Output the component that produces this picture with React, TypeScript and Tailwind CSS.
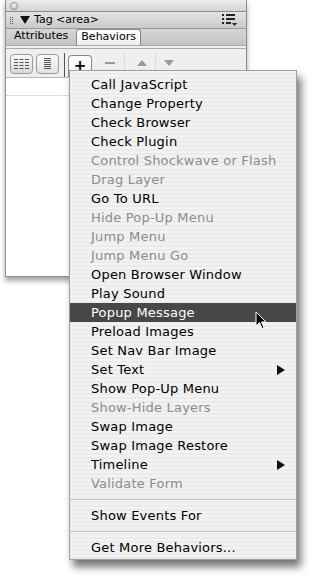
import React from 'react';

type Item = { label: string; disabled?: boolean; active?: boolean; sub?: boolean };

const items: Item[] = [
  { label: 'Call JavaScript' },
  { label: 'Change Property' },
  { label: 'Check Browser' },
  { label: 'Check Plugin' },
  { label: 'Control Shockwave or Flash', disabled: true },
  { label: 'Drag Layer', disabled: true },
  { label: 'Go To URL' },
  { label: 'Hide Pop-Up Menu', disabled: true },
  { label: 'Jump Menu', disabled: true },
  { label: 'Jump Menu Go', disabled: true },
  { label: 'Open Browser Window' },
  { label: 'Play Sound' },
  { label: 'Popup Message', active: true },
  { label: 'Preload Images' },
  { label: 'Set Nav Bar Image' },
  { label: 'Set Text', sub: true },
  { label: 'Show Pop-Up Menu' },
  { label: 'Show-Hide Layers', disabled: true },
  { label: 'Swap Image' },
  { label: 'Swap Image Restore' },
  { label: 'Timeline', sub: true },
  { label: 'Validate Form', disabled: true },
];

function MenuRow({ item }: { item: Item }) {
  const color = item.active ? 'bg-[#474747] text-white' : item.disabled ? 'text-[#8c8c8c]' : 'text-black';
  return (
    <div className={`flex h-[19px] items-center justify-between pl-[21px] pr-[11px] ${color}`}>
      <span>{item.label}</span>
      {item.sub && (
        <svg width="8" height="10" viewBox="0 0 8 10">
          <path d="M0 0 L8 5 L0 10 Z" fill="#111" />
        </svg>
      )}
    </div>
  );
}

function Separator() {
  return <div className="my-[6px] h-px bg-[#c4c4c4]" />;
}

export default function App() {
  return (
    <div
      className="relative h-[582px] w-[312px] overflow-hidden bg-white text-[13px]"
      style={{ fontFamily: '"DejaVu Sans", "Noto Sans", sans-serif' }}
    >
      {/* Tag inspector panel */}
      <div className="ml-[5px] flex h-[277px] w-[242px] flex-col border-x border-b border-[#8e8e8e] bg-white shadow-[0_4px_5px_rgba(0,0,0,0.35)]">
        {/* window title strip */}
        <div className="flex h-[12px] items-center border-b border-[#8a8a8a] bg-gradient-to-b from-[#ececec] to-[#d4d4d4] pl-[4px]">
          <div className="h-[8px] w-[8px] rounded-full border border-[#8a8a8a] bg-gradient-to-b from-[#f4f4f4] to-[#cfcfcf]" />
        </div>

        {/* panel group header */}
        <div className="flex h-[17px] items-center border-b border-[#9a9a9a] bg-gradient-to-b from-[#e4e4e4] to-[#c9c9c9] pl-[4px] pr-[8px]">
          <div className="mr-[3px] flex flex-col gap-[1px]">
            <div className="flex gap-[1px]">
              <div className="h-[1px] w-[1px] bg-[#555]" />
              <div className="h-[1px] w-[1px] bg-[#555]" />
            </div>
            <div className="flex gap-[1px]">
              <div className="h-[1px] w-[1px] bg-[#555]" />
              <div className="h-[1px] w-[1px] bg-[#555]" />
            </div>
            <div className="flex gap-[1px]">
              <div className="h-[1px] w-[1px] bg-[#555]" />
              <div className="h-[1px] w-[1px] bg-[#555]" />
            </div>
            <div className="flex gap-[1px]">
              <div className="h-[1px] w-[1px] bg-[#555]" />
              <div className="h-[1px] w-[1px] bg-[#555]" />
            </div>
          </div>
          <svg width="10" height="8" viewBox="0 0 10 8" className="ml-[4px]">
            <path d="M0 0 L10 0 L5 8 Z" fill="#111" />
          </svg>
          <span className="ml-[4px] text-[11px] text-black">Tag &lt;area&gt;</span>
          <svg width="16" height="12" viewBox="0 0 16 12" className="ml-auto">
            <rect x="0" y="0" width="2" height="2" fill="#222" />
            <rect x="4" y="0" width="9" height="2" fill="#222" />
            <rect x="0" y="4" width="2" height="2" fill="#222" />
            <rect x="4" y="4" width="9" height="2" fill="#222" />
            <rect x="0" y="8" width="2" height="2" fill="#222" />
            <rect x="4" y="8" width="5" height="2" fill="#222" />
            <path d="M10 9 L15 9 L12.5 12 Z" fill="#222" />
          </svg>
        </div>

        {/* tabs */}
        <div className="flex h-[16px] items-end bg-gradient-to-b from-[#d6d6d6] to-[#c4c4c4] pl-[8px]">
          <span className="mb-[1px] text-[11px] text-black">Attributes</span>
          <div className="ml-[8px] flex h-[16px] items-center rounded-t-[3px] border border-b-0 border-[#888] bg-gradient-to-b from-white to-[#eeeeee] px-[4px] text-[11px] text-black">
            Behaviors
          </div>
        </div>
        <div className="h-[4px] border-y border-[#a8a8a8] bg-[#f0f0f0]" />

        {/* toolbar */}
        <div className="flex h-[28px] items-end bg-[#efefef] pl-[4px]">
          <div className="mb-[3px] flex h-[20px] w-[23px] items-center justify-center rounded-[4px] border border-[#999] bg-gradient-to-b from-[#fafafa] to-[#d8d8d8]">
            <svg width="15" height="10" viewBox="0 0 15 10">
              {[0, 3, 6, 9].map((y) => (
                <g key={y}>
                  <rect x="0" y={y} width="4" height="1" fill="#555" />
                  <rect x="5.5" y={y} width="4" height="1" fill="#555" />
                  <rect x="11" y={y} width="4" height="1" fill="#555" />
                </g>
              ))}
            </svg>
          </div>
          <div className="mb-[3px] ml-[3px] flex h-[20px] w-[23px] items-center justify-center rounded-[4px] border border-[#999] bg-gradient-to-b from-[#fafafa] to-[#e2e2e2]">
            <svg width="7" height="12" viewBox="0 0 7 12">
              {[0, 2, 4, 6, 8, 10].map((y) => (
                <rect key={y} x="0" y={y} width="7" height="1" fill="#555" />
              ))}
            </svg>
          </div>
          <div className="ml-[5px] h-[24px] w-px bg-[#555]" />
          <div className="ml-[3px] flex h-[22px] w-[24px] items-start justify-center rounded-t-[4px] border border-b-0 border-[#888] bg-gradient-to-b from-white to-[#f4f4f4] pt-[2px]">
            <span className="text-[15px] font-bold leading-[16px] text-black">+</span>
          </div>
          <div className="mb-[6px] ml-[10px] flex h-[16px] w-[16px] items-center justify-center">
            <div className="h-[2px] w-[10px] bg-[#9a9a9a]" />
          </div>
          <div className="mb-[4px] ml-[6px] h-[20px] w-px bg-[#dcdcdc]" />
          <div className="mb-[6px] ml-[10px] flex h-[16px] w-[14px] items-center justify-center">
            <svg width="10" height="6" viewBox="0 0 10 6">
              <path d="M0 6 L10 6 L5 0 Z" fill="#9a9a9a" />
            </svg>
          </div>
          <div className="mb-[4px] ml-[6px] h-[20px] w-px bg-[#dcdcdc]" />
          <div className="mb-[6px] ml-[6px] flex h-[16px] w-[14px] items-center justify-center">
            <svg width="10" height="6" viewBox="0 0 10 6">
              <path d="M0 0 L10 0 L5 6 Z" fill="#9a9a9a" />
            </svg>
          </div>
        </div>

        {/* behaviors list */}
        <div className="flex-1 border-t border-[#b8b8b8] bg-white">
          <div className="h-[18px] border-b border-[#dcdcdc]" />
        </div>
      </div>

      {/* popup menu */}
      <div className="absolute left-[69px] top-[70px] w-[228px] border border-[#a0a0a0] bg-[repeating-linear-gradient(180deg,#f3f3f3_0px,#f3f3f3_2px,#ebebeb_2px,#ebebeb_4px)] pb-[2px] pt-[4px] leading-[19px] tracking-[0.2px] shadow-[4px_7px_8px_rgba(0,0,0,0.55)]">
        {items.map((it) => (
          <MenuRow key={it.label} item={it} />
        ))}
        <Separator />
        <MenuRow item={{ label: 'Show Events For' }} />
        <Separator />
        <MenuRow item={{ label: 'Get More Behaviors...' }} />
      </div>

      {/* mouse pointer */}
      <svg className="absolute left-[255px] top-[311px]" width="12" height="19" viewBox="0 0 12 19">
        <path d="M1 1 L1 15 L4.5 11.5 L7 17.5 L9 16.7 L6.6 11 L11 11 Z" fill="#000" stroke="#fff" strokeWidth="1" />
      </svg>
    </div>
  );
}
